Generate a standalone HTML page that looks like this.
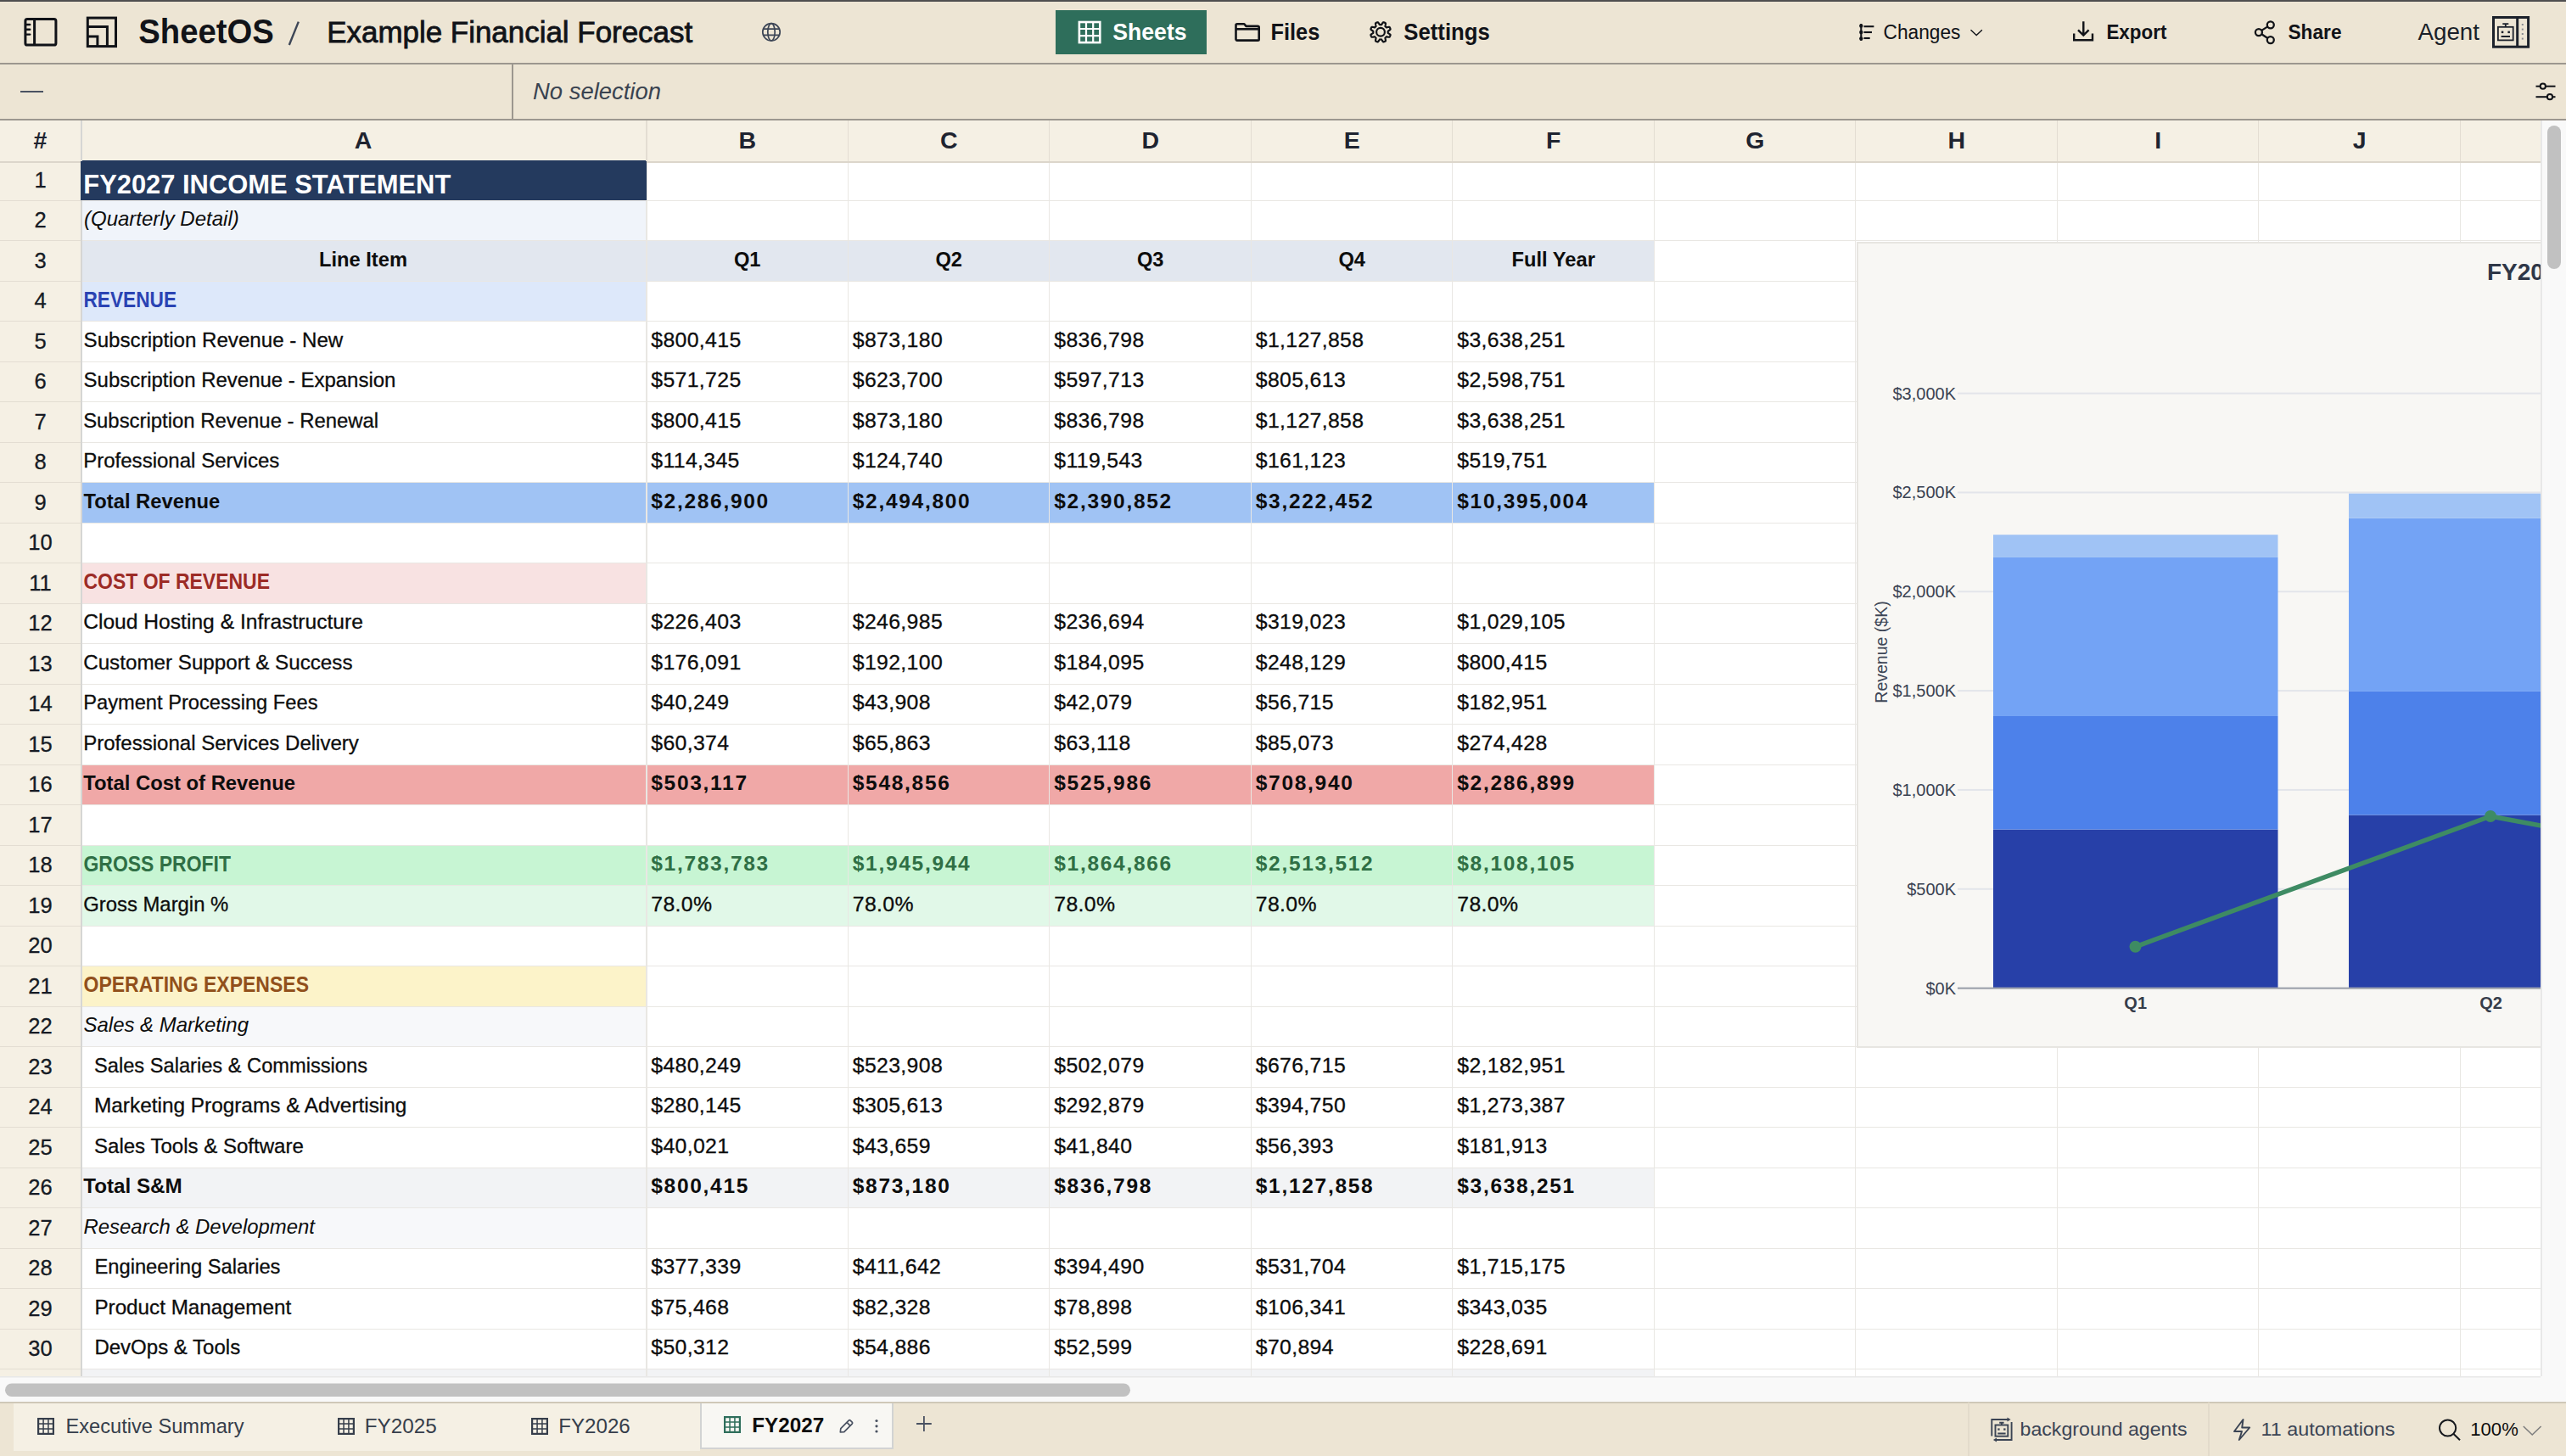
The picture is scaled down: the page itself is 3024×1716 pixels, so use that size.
<!DOCTYPE html>
<html><head><meta charset="utf-8"><title>SheetOS - Example Financial Forecast</title>
<style>
html,body{margin:0;padding:0;width:3024px;height:1716px;overflow:hidden;background:#ede5d4;}
svg{display:block;font-family:"Liberation Sans", sans-serif;}
text{white-space:pre;}
</style></head><body>
<svg width="3024" height="1716" viewBox="0 0 3024 1716">
<rect x="0" y="0" width="3024" height="1716" fill="#ede5d4" />
<rect x="0" y="0" width="3024" height="2" fill="#4f4f4f" />
<rect x="0" y="74" width="3024" height="2" fill="#9c978f" />
<rect x="603" y="76" width="2" height="64" fill="#9c978f" />
<rect x="0" y="140" width="3024" height="2" fill="#9c978f" />
<rect x="0" y="142" width="2994" height="48" fill="#f5f0e4" />
<rect x="0" y="190" width="95" height="1432" fill="#f5f0e4" />
<rect x="97" y="190" width="2897" height="1432" fill="#ffffff" />
<rect x="97" y="189" width="664" height="47" fill="#243a5e" />
<rect x="97" y="237" width="664" height="46" fill="#f0f4fa" />
<rect x="97" y="284" width="664" height="47" fill="#e2e7ef" />
<rect x="763" y="284" width="236" height="47" fill="#e2e7ef" />
<rect x="1000" y="284" width="236" height="47" fill="#e2e7ef" />
<rect x="1237" y="284" width="237" height="47" fill="#e2e7ef" />
<rect x="1475" y="284" width="236" height="47" fill="#e2e7ef" />
<rect x="1712" y="284" width="237" height="47" fill="#e2e7ef" />
<rect x="97" y="332" width="664" height="46" fill="#dde8fa" />
<rect x="97" y="569" width="664" height="47" fill="#a0c3f4" />
<rect x="763" y="569" width="236" height="47" fill="#a0c3f4" />
<rect x="1000" y="569" width="236" height="47" fill="#a0c3f4" />
<rect x="1237" y="569" width="237" height="47" fill="#a0c3f4" />
<rect x="1475" y="569" width="236" height="47" fill="#a0c3f4" />
<rect x="1712" y="569" width="237" height="47" fill="#a0c3f4" />
<rect x="97" y="664" width="664" height="47" fill="#f8e2e2" />
<rect x="97" y="902" width="664" height="46" fill="#f0a8a7" />
<rect x="763" y="902" width="236" height="46" fill="#f0a8a7" />
<rect x="1000" y="902" width="236" height="46" fill="#f0a8a7" />
<rect x="1237" y="902" width="237" height="46" fill="#f0a8a7" />
<rect x="1475" y="902" width="236" height="46" fill="#f0a8a7" />
<rect x="1712" y="902" width="237" height="46" fill="#f0a8a7" />
<rect x="97" y="997" width="664" height="46" fill="#c7f5d3" />
<rect x="763" y="997" width="236" height="46" fill="#c7f5d3" />
<rect x="1000" y="997" width="236" height="46" fill="#c7f5d3" />
<rect x="1237" y="997" width="237" height="46" fill="#c7f5d3" />
<rect x="1475" y="997" width="236" height="46" fill="#c7f5d3" />
<rect x="1712" y="997" width="237" height="46" fill="#c7f5d3" />
<rect x="97" y="1044" width="664" height="47" fill="#e1f8e8" />
<rect x="763" y="1044" width="236" height="47" fill="#e1f8e8" />
<rect x="1000" y="1044" width="236" height="47" fill="#e1f8e8" />
<rect x="1237" y="1044" width="237" height="47" fill="#e1f8e8" />
<rect x="1475" y="1044" width="236" height="47" fill="#e1f8e8" />
<rect x="1712" y="1044" width="237" height="47" fill="#e1f8e8" />
<rect x="97" y="1139" width="664" height="47" fill="#fcf3c9" />
<rect x="97" y="1187" width="664" height="46" fill="#f7f8fa" />
<rect x="97" y="1377" width="664" height="46" fill="#f2f3f5" />
<rect x="763" y="1377" width="236" height="46" fill="#f2f3f5" />
<rect x="1000" y="1377" width="236" height="46" fill="#f2f3f5" />
<rect x="1237" y="1377" width="237" height="46" fill="#f2f3f5" />
<rect x="1475" y="1377" width="236" height="46" fill="#f2f3f5" />
<rect x="1712" y="1377" width="237" height="46" fill="#f2f3f5" />
<rect x="97" y="1424" width="664" height="47" fill="#f7f8fa" />
<rect x="97" y="1614" width="664" height="47" fill="#f2f3f5" />
<rect x="763" y="1614" width="236" height="47" fill="#f2f3f5" />
<rect x="1000" y="1614" width="236" height="47" fill="#f2f3f5" />
<rect x="1237" y="1614" width="237" height="47" fill="#f2f3f5" />
<rect x="1475" y="1614" width="236" height="47" fill="#f2f3f5" />
<rect x="1712" y="1614" width="237" height="47" fill="#f2f3f5" />
<rect x="0" y="236" width="95" height="1" fill="#e3ddd2" />
<rect x="97" y="236" width="2897" height="1" fill="#e9e7e3" />
<rect x="0" y="283" width="95" height="1" fill="#e3ddd2" />
<rect x="97" y="283" width="2897" height="1" fill="#e9e7e3" />
<rect x="0" y="331" width="95" height="1" fill="#e3ddd2" />
<rect x="97" y="331" width="2897" height="1" fill="#e9e7e3" />
<rect x="0" y="378" width="95" height="1" fill="#e3ddd2" />
<rect x="97" y="378" width="2897" height="1" fill="#e9e7e3" />
<rect x="0" y="426" width="95" height="1" fill="#e3ddd2" />
<rect x="97" y="426" width="2897" height="1" fill="#e9e7e3" />
<rect x="0" y="473" width="95" height="1" fill="#e3ddd2" />
<rect x="97" y="473" width="2897" height="1" fill="#e9e7e3" />
<rect x="0" y="521" width="95" height="1" fill="#e3ddd2" />
<rect x="97" y="521" width="2897" height="1" fill="#e9e7e3" />
<rect x="0" y="568" width="95" height="1" fill="#e3ddd2" />
<rect x="97" y="568" width="2897" height="1" fill="#e9e7e3" />
<rect x="0" y="616" width="95" height="1" fill="#e3ddd2" />
<rect x="97" y="616" width="2897" height="1" fill="#e9e7e3" />
<rect x="0" y="663" width="95" height="1" fill="#e3ddd2" />
<rect x="97" y="663" width="2897" height="1" fill="#e9e7e3" />
<rect x="0" y="711" width="95" height="1" fill="#e3ddd2" />
<rect x="97" y="711" width="2897" height="1" fill="#e9e7e3" />
<rect x="0" y="758" width="95" height="1" fill="#e3ddd2" />
<rect x="97" y="758" width="2897" height="1" fill="#e9e7e3" />
<rect x="0" y="806" width="95" height="1" fill="#e3ddd2" />
<rect x="97" y="806" width="2897" height="1" fill="#e9e7e3" />
<rect x="0" y="853" width="95" height="1" fill="#e3ddd2" />
<rect x="97" y="853" width="2897" height="1" fill="#e9e7e3" />
<rect x="0" y="901" width="95" height="1" fill="#e3ddd2" />
<rect x="97" y="901" width="2897" height="1" fill="#e9e7e3" />
<rect x="0" y="948" width="95" height="1" fill="#e3ddd2" />
<rect x="97" y="948" width="2897" height="1" fill="#e9e7e3" />
<rect x="0" y="996" width="95" height="1" fill="#e3ddd2" />
<rect x="97" y="996" width="2897" height="1" fill="#e9e7e3" />
<rect x="0" y="1043" width="95" height="1" fill="#e3ddd2" />
<rect x="97" y="1043" width="2897" height="1" fill="#e9e7e3" />
<rect x="0" y="1091" width="95" height="1" fill="#e3ddd2" />
<rect x="97" y="1091" width="2897" height="1" fill="#e9e7e3" />
<rect x="0" y="1138" width="95" height="1" fill="#e3ddd2" />
<rect x="97" y="1138" width="2897" height="1" fill="#e9e7e3" />
<rect x="0" y="1186" width="95" height="1" fill="#e3ddd2" />
<rect x="97" y="1186" width="2897" height="1" fill="#e9e7e3" />
<rect x="0" y="1233" width="95" height="1" fill="#e3ddd2" />
<rect x="97" y="1233" width="2897" height="1" fill="#e9e7e3" />
<rect x="0" y="1281" width="95" height="1" fill="#e3ddd2" />
<rect x="97" y="1281" width="2897" height="1" fill="#e9e7e3" />
<rect x="0" y="1328" width="95" height="1" fill="#e3ddd2" />
<rect x="97" y="1328" width="2897" height="1" fill="#e9e7e3" />
<rect x="0" y="1376" width="95" height="1" fill="#e3ddd2" />
<rect x="97" y="1376" width="2897" height="1" fill="#e9e7e3" />
<rect x="0" y="1423" width="95" height="1" fill="#e3ddd2" />
<rect x="97" y="1423" width="2897" height="1" fill="#e9e7e3" />
<rect x="0" y="1471" width="95" height="1" fill="#e3ddd2" />
<rect x="97" y="1471" width="2897" height="1" fill="#e9e7e3" />
<rect x="0" y="1518" width="95" height="1" fill="#e3ddd2" />
<rect x="97" y="1518" width="2897" height="1" fill="#e9e7e3" />
<rect x="0" y="1566" width="95" height="1" fill="#e3ddd2" />
<rect x="97" y="1566" width="2897" height="1" fill="#e9e7e3" />
<rect x="0" y="1613" width="95" height="1" fill="#e3ddd2" />
<rect x="97" y="1613" width="2897" height="1" fill="#e9e7e3" />
<rect x="0" y="1661" width="95" height="1" fill="#e3ddd2" />
<rect x="97" y="1661" width="2897" height="1" fill="#e9e7e3" />
<rect x="0" y="190" width="2994" height="2" fill="#dcd6cb" />
<rect x="761" y="142" width="2" height="48" fill="#e3ddd2" />
<rect x="761" y="192" width="2" height="1430" fill="#e9e7e3" />
<rect x="999" y="142" width="1" height="48" fill="#e3ddd2" />
<rect x="999" y="192" width="1" height="1430" fill="#e9e7e3" />
<rect x="1236" y="142" width="1" height="48" fill="#e3ddd2" />
<rect x="1236" y="192" width="1" height="1430" fill="#e9e7e3" />
<rect x="1474" y="142" width="1" height="48" fill="#e3ddd2" />
<rect x="1474" y="192" width="1" height="1430" fill="#e9e7e3" />
<rect x="1711" y="142" width="1" height="48" fill="#e3ddd2" />
<rect x="1711" y="192" width="1" height="1430" fill="#e9e7e3" />
<rect x="1949" y="142" width="1" height="48" fill="#e3ddd2" />
<rect x="1949" y="192" width="1" height="1430" fill="#e9e7e3" />
<rect x="2186" y="142" width="1" height="48" fill="#e3ddd2" />
<rect x="2186" y="192" width="1" height="1430" fill="#e9e7e3" />
<rect x="2424" y="142" width="1" height="48" fill="#e3ddd2" />
<rect x="2424" y="192" width="1" height="1430" fill="#e9e7e3" />
<rect x="2661" y="142" width="1" height="48" fill="#e3ddd2" />
<rect x="2661" y="192" width="1" height="1430" fill="#e9e7e3" />
<rect x="2899" y="142" width="1" height="48" fill="#e3ddd2" />
<rect x="2899" y="192" width="1" height="1430" fill="#e9e7e3" />
<rect x="95" y="142" width="2" height="1480" fill="#d6d6d4" />
<rect x="95" y="190" width="667" height="46" fill="#243a5e" />
<text x="47.5" y="175" font-size="28.5" fill="#1f2430" font-weight="700" text-anchor="middle" >#</text>
<text x="428" y="175.2" font-size="28.5" fill="#1f2430" font-weight="700" text-anchor="middle" >A</text>
<text x="880.75" y="175.2" font-size="28.5" fill="#1f2430" font-weight="700" text-anchor="middle" >B</text>
<text x="1118.25" y="175.2" font-size="28.5" fill="#1f2430" font-weight="700" text-anchor="middle" >C</text>
<text x="1355.75" y="175.2" font-size="28.5" fill="#1f2430" font-weight="700" text-anchor="middle" >D</text>
<text x="1593.25" y="175.2" font-size="28.5" fill="#1f2430" font-weight="700" text-anchor="middle" >E</text>
<text x="1830.75" y="175.2" font-size="28.5" fill="#1f2430" font-weight="700" text-anchor="middle" >F</text>
<text x="2068.25" y="175.2" font-size="28.5" fill="#1f2430" font-weight="700" text-anchor="middle" >G</text>
<text x="2305.75" y="175.2" font-size="28.5" fill="#1f2430" font-weight="700" text-anchor="middle" >H</text>
<text x="2543.25" y="175.2" font-size="28.5" fill="#1f2430" font-weight="700" text-anchor="middle" >I</text>
<text x="2780.75" y="175.2" font-size="28.5" fill="#1f2430" font-weight="700" text-anchor="middle" >J</text>
<text x="47.5" y="220.6" font-size="25.5" fill="#161b24" text-anchor="middle" stroke="#161b24" stroke-width="0.3">1</text>
<text x="47.5" y="268.1" font-size="25.5" fill="#161b24" text-anchor="middle" stroke="#161b24" stroke-width="0.3">2</text>
<text x="47.5" y="315.6" font-size="25.5" fill="#161b24" text-anchor="middle" stroke="#161b24" stroke-width="0.3">3</text>
<text x="47.5" y="363.1" font-size="25.5" fill="#161b24" text-anchor="middle" stroke="#161b24" stroke-width="0.3">4</text>
<text x="47.5" y="410.6" font-size="25.5" fill="#161b24" text-anchor="middle" stroke="#161b24" stroke-width="0.3">5</text>
<text x="47.5" y="458.1" font-size="25.5" fill="#161b24" text-anchor="middle" stroke="#161b24" stroke-width="0.3">6</text>
<text x="47.5" y="505.6" font-size="25.5" fill="#161b24" text-anchor="middle" stroke="#161b24" stroke-width="0.3">7</text>
<text x="47.5" y="553.1" font-size="25.5" fill="#161b24" text-anchor="middle" stroke="#161b24" stroke-width="0.3">8</text>
<text x="47.5" y="600.6" font-size="25.5" fill="#161b24" text-anchor="middle" stroke="#161b24" stroke-width="0.3">9</text>
<text x="47.5" y="648.1" font-size="25.5" fill="#161b24" text-anchor="middle" stroke="#161b24" stroke-width="0.3">10</text>
<text x="47.5" y="695.6" font-size="25.5" fill="#161b24" text-anchor="middle" stroke="#161b24" stroke-width="0.3">11</text>
<text x="47.5" y="743.1" font-size="25.5" fill="#161b24" text-anchor="middle" stroke="#161b24" stroke-width="0.3">12</text>
<text x="47.5" y="790.6" font-size="25.5" fill="#161b24" text-anchor="middle" stroke="#161b24" stroke-width="0.3">13</text>
<text x="47.5" y="838.1" font-size="25.5" fill="#161b24" text-anchor="middle" stroke="#161b24" stroke-width="0.3">14</text>
<text x="47.5" y="885.6" font-size="25.5" fill="#161b24" text-anchor="middle" stroke="#161b24" stroke-width="0.3">15</text>
<text x="47.5" y="933.1" font-size="25.5" fill="#161b24" text-anchor="middle" stroke="#161b24" stroke-width="0.3">16</text>
<text x="47.5" y="980.6" font-size="25.5" fill="#161b24" text-anchor="middle" stroke="#161b24" stroke-width="0.3">17</text>
<text x="47.5" y="1028.1" font-size="25.5" fill="#161b24" text-anchor="middle" stroke="#161b24" stroke-width="0.3">18</text>
<text x="47.5" y="1075.6" font-size="25.5" fill="#161b24" text-anchor="middle" stroke="#161b24" stroke-width="0.3">19</text>
<text x="47.5" y="1123.1" font-size="25.5" fill="#161b24" text-anchor="middle" stroke="#161b24" stroke-width="0.3">20</text>
<text x="47.5" y="1170.6" font-size="25.5" fill="#161b24" text-anchor="middle" stroke="#161b24" stroke-width="0.3">21</text>
<text x="47.5" y="1218.1" font-size="25.5" fill="#161b24" text-anchor="middle" stroke="#161b24" stroke-width="0.3">22</text>
<text x="47.5" y="1265.6" font-size="25.5" fill="#161b24" text-anchor="middle" stroke="#161b24" stroke-width="0.3">23</text>
<text x="47.5" y="1313.1" font-size="25.5" fill="#161b24" text-anchor="middle" stroke="#161b24" stroke-width="0.3">24</text>
<text x="47.5" y="1360.6" font-size="25.5" fill="#161b24" text-anchor="middle" stroke="#161b24" stroke-width="0.3">25</text>
<text x="47.5" y="1408.1" font-size="25.5" fill="#161b24" text-anchor="middle" stroke="#161b24" stroke-width="0.3">26</text>
<text x="47.5" y="1455.6" font-size="25.5" fill="#161b24" text-anchor="middle" stroke="#161b24" stroke-width="0.3">27</text>
<text x="47.5" y="1503.1" font-size="25.5" fill="#161b24" text-anchor="middle" stroke="#161b24" stroke-width="0.3">28</text>
<text x="47.5" y="1550.6" font-size="25.5" fill="#161b24" text-anchor="middle" stroke="#161b24" stroke-width="0.3">29</text>
<text x="47.5" y="1598.1" font-size="25.5" fill="#161b24" text-anchor="middle" stroke="#161b24" stroke-width="0.3">30</text>
<text x="98.3" y="228.3" font-size="31.5" fill="#ffffff" font-weight="700" textLength="433" lengthAdjust="spacingAndGlyphs" >FY2027 INCOME STATEMENT</text>
<text x="99" y="266.4" font-size="24" fill="#0d0d0d" font-style="italic" >(Quarterly Detail)</text>
<text x="428" y="313.9" font-size="23.7" fill="#0d0d0d" font-weight="700" text-anchor="middle" >Line Item</text>
<text x="880.75" y="313.9" font-size="23.7" fill="#0d0d0d" font-weight="700" text-anchor="middle" >Q1</text>
<text x="1118.25" y="313.9" font-size="23.7" fill="#0d0d0d" font-weight="700" text-anchor="middle" >Q2</text>
<text x="1355.75" y="313.9" font-size="23.7" fill="#0d0d0d" font-weight="700" text-anchor="middle" >Q3</text>
<text x="1593.25" y="313.9" font-size="23.7" fill="#0d0d0d" font-weight="700" text-anchor="middle" >Q4</text>
<text x="1830.75" y="313.9" font-size="23.7" fill="#0d0d0d" font-weight="700" text-anchor="middle" >Full Year</text>
<text x="98.5" y="361.7" font-size="25.2" fill="#2a43b3" font-weight="700" textLength="109.5" lengthAdjust="spacingAndGlyphs" >REVENUE</text>
<text x="98.6" y="408.9" font-size="24.2" fill="#0d0d0d" textLength="305.7" lengthAdjust="spacingAndGlyphs" stroke="#0d0d0d" stroke-width="0.3">Subscription Revenue - New</text>
<text x="767.3" y="408.9" font-size="24.8" fill="#0d0d0d" letter-spacing="0.35" stroke="#0d0d0d" stroke-width="0.3">$800,415</text>
<text x="1004.8" y="408.9" font-size="24.8" fill="#0d0d0d" letter-spacing="0.35" stroke="#0d0d0d" stroke-width="0.3">$873,180</text>
<text x="1242.3" y="408.9" font-size="24.8" fill="#0d0d0d" letter-spacing="0.35" stroke="#0d0d0d" stroke-width="0.3">$836,798</text>
<text x="1479.8" y="408.9" font-size="24.8" fill="#0d0d0d" letter-spacing="0.35" stroke="#0d0d0d" stroke-width="0.3">$1,127,858</text>
<text x="1717.3" y="408.9" font-size="24.8" fill="#0d0d0d" letter-spacing="0.35" stroke="#0d0d0d" stroke-width="0.3">$3,638,251</text>
<text x="98.6" y="456.4" font-size="24.2" fill="#0d0d0d" textLength="367.8" lengthAdjust="spacingAndGlyphs" stroke="#0d0d0d" stroke-width="0.3">Subscription Revenue - Expansion</text>
<text x="767.3" y="456.4" font-size="24.8" fill="#0d0d0d" letter-spacing="0.35" stroke="#0d0d0d" stroke-width="0.3">$571,725</text>
<text x="1004.8" y="456.4" font-size="24.8" fill="#0d0d0d" letter-spacing="0.35" stroke="#0d0d0d" stroke-width="0.3">$623,700</text>
<text x="1242.3" y="456.4" font-size="24.8" fill="#0d0d0d" letter-spacing="0.35" stroke="#0d0d0d" stroke-width="0.3">$597,713</text>
<text x="1479.8" y="456.4" font-size="24.8" fill="#0d0d0d" letter-spacing="0.35" stroke="#0d0d0d" stroke-width="0.3">$805,613</text>
<text x="1717.3" y="456.4" font-size="24.8" fill="#0d0d0d" letter-spacing="0.35" stroke="#0d0d0d" stroke-width="0.3">$2,598,751</text>
<text x="98.14999999999999" y="503.9" font-size="24.2" fill="#0d0d0d" textLength="348.0" lengthAdjust="spacingAndGlyphs" stroke="#0d0d0d" stroke-width="0.3">Subscription Revenue - Renewal</text>
<text x="767.3" y="503.9" font-size="24.8" fill="#0d0d0d" letter-spacing="0.35" stroke="#0d0d0d" stroke-width="0.3">$800,415</text>
<text x="1004.8" y="503.9" font-size="24.8" fill="#0d0d0d" letter-spacing="0.35" stroke="#0d0d0d" stroke-width="0.3">$873,180</text>
<text x="1242.3" y="503.9" font-size="24.8" fill="#0d0d0d" letter-spacing="0.35" stroke="#0d0d0d" stroke-width="0.3">$836,798</text>
<text x="1479.8" y="503.9" font-size="24.8" fill="#0d0d0d" letter-spacing="0.35" stroke="#0d0d0d" stroke-width="0.3">$1,127,858</text>
<text x="1717.3" y="503.9" font-size="24.8" fill="#0d0d0d" letter-spacing="0.35" stroke="#0d0d0d" stroke-width="0.3">$3,638,251</text>
<text x="98.14999999999999" y="551.4" font-size="24.2" fill="#0d0d0d" textLength="231.2" lengthAdjust="spacingAndGlyphs" stroke="#0d0d0d" stroke-width="0.3">Professional Services</text>
<text x="767.3" y="551.4" font-size="24.8" fill="#0d0d0d" letter-spacing="0.35" stroke="#0d0d0d" stroke-width="0.3">$114,345</text>
<text x="1004.8" y="551.4" font-size="24.8" fill="#0d0d0d" letter-spacing="0.35" stroke="#0d0d0d" stroke-width="0.3">$124,740</text>
<text x="1242.3" y="551.4" font-size="24.8" fill="#0d0d0d" letter-spacing="0.35" stroke="#0d0d0d" stroke-width="0.3">$119,543</text>
<text x="1479.8" y="551.4" font-size="24.8" fill="#0d0d0d" letter-spacing="0.35" stroke="#0d0d0d" stroke-width="0.3">$161,123</text>
<text x="1717.3" y="551.4" font-size="24.8" fill="#0d0d0d" letter-spacing="0.35" stroke="#0d0d0d" stroke-width="0.3">$519,751</text>
<text x="98.5" y="598.9" font-size="24.2" fill="#0d0d0d" font-weight="700" textLength="160.7" lengthAdjust="spacingAndGlyphs" >Total Revenue</text>
<text x="767.3" y="598.9" font-size="24.5" fill="#0d0d0d" font-weight="700" letter-spacing="1.7">$2,286,900</text>
<text x="1004.8" y="598.9" font-size="24.5" fill="#0d0d0d" font-weight="700" letter-spacing="1.7">$2,494,800</text>
<text x="1242.3" y="598.9" font-size="24.5" fill="#0d0d0d" font-weight="700" letter-spacing="1.7">$2,390,852</text>
<text x="1479.8" y="598.9" font-size="24.5" fill="#0d0d0d" font-weight="700" letter-spacing="1.7">$3,222,452</text>
<text x="1717.3" y="598.9" font-size="24.5" fill="#0d0d0d" font-weight="700" letter-spacing="1.7">$10,395,004</text>
<text x="98.5" y="694.1999999999999" font-size="25.2" fill="#9c2b26" font-weight="700" textLength="219.5" lengthAdjust="spacingAndGlyphs" >COST OF REVENUE</text>
<text x="98.2" y="741.4" font-size="24.2" fill="#0d0d0d" textLength="329.7" lengthAdjust="spacingAndGlyphs" stroke="#0d0d0d" stroke-width="0.3">Cloud Hosting &amp; Infrastructure</text>
<text x="767.3" y="741.4" font-size="24.8" fill="#0d0d0d" letter-spacing="0.35" stroke="#0d0d0d" stroke-width="0.3">$226,403</text>
<text x="1004.8" y="741.4" font-size="24.8" fill="#0d0d0d" letter-spacing="0.35" stroke="#0d0d0d" stroke-width="0.3">$246,985</text>
<text x="1242.3" y="741.4" font-size="24.8" fill="#0d0d0d" letter-spacing="0.35" stroke="#0d0d0d" stroke-width="0.3">$236,694</text>
<text x="1479.8" y="741.4" font-size="24.8" fill="#0d0d0d" letter-spacing="0.35" stroke="#0d0d0d" stroke-width="0.3">$319,023</text>
<text x="1717.3" y="741.4" font-size="24.8" fill="#0d0d0d" letter-spacing="0.35" stroke="#0d0d0d" stroke-width="0.3">$1,029,105</text>
<text x="98.2" y="788.9" font-size="24.2" fill="#0d0d0d" textLength="317.3" lengthAdjust="spacingAndGlyphs" stroke="#0d0d0d" stroke-width="0.3">Customer Support &amp; Success</text>
<text x="767.3" y="788.9" font-size="24.8" fill="#0d0d0d" letter-spacing="0.35" stroke="#0d0d0d" stroke-width="0.3">$176,091</text>
<text x="1004.8" y="788.9" font-size="24.8" fill="#0d0d0d" letter-spacing="0.35" stroke="#0d0d0d" stroke-width="0.3">$192,100</text>
<text x="1242.3" y="788.9" font-size="24.8" fill="#0d0d0d" letter-spacing="0.35" stroke="#0d0d0d" stroke-width="0.3">$184,095</text>
<text x="1479.8" y="788.9" font-size="24.8" fill="#0d0d0d" letter-spacing="0.35" stroke="#0d0d0d" stroke-width="0.3">$248,129</text>
<text x="1717.3" y="788.9" font-size="24.8" fill="#0d0d0d" letter-spacing="0.35" stroke="#0d0d0d" stroke-width="0.3">$800,415</text>
<text x="98.2" y="836.4" font-size="24.2" fill="#0d0d0d" textLength="276.3" lengthAdjust="spacingAndGlyphs" stroke="#0d0d0d" stroke-width="0.3">Payment Processing Fees</text>
<text x="767.3" y="836.4" font-size="24.8" fill="#0d0d0d" letter-spacing="0.35" stroke="#0d0d0d" stroke-width="0.3">$40,249</text>
<text x="1004.8" y="836.4" font-size="24.8" fill="#0d0d0d" letter-spacing="0.35" stroke="#0d0d0d" stroke-width="0.3">$43,908</text>
<text x="1242.3" y="836.4" font-size="24.8" fill="#0d0d0d" letter-spacing="0.35" stroke="#0d0d0d" stroke-width="0.3">$42,079</text>
<text x="1479.8" y="836.4" font-size="24.8" fill="#0d0d0d" letter-spacing="0.35" stroke="#0d0d0d" stroke-width="0.3">$56,715</text>
<text x="1717.3" y="836.4" font-size="24.8" fill="#0d0d0d" letter-spacing="0.35" stroke="#0d0d0d" stroke-width="0.3">$182,951</text>
<text x="98.2" y="883.9" font-size="24.2" fill="#0d0d0d" textLength="324.7" lengthAdjust="spacingAndGlyphs" stroke="#0d0d0d" stroke-width="0.3">Professional Services Delivery</text>
<text x="767.3" y="883.9" font-size="24.8" fill="#0d0d0d" letter-spacing="0.35" stroke="#0d0d0d" stroke-width="0.3">$60,374</text>
<text x="1004.8" y="883.9" font-size="24.8" fill="#0d0d0d" letter-spacing="0.35" stroke="#0d0d0d" stroke-width="0.3">$65,863</text>
<text x="1242.3" y="883.9" font-size="24.8" fill="#0d0d0d" letter-spacing="0.35" stroke="#0d0d0d" stroke-width="0.3">$63,118</text>
<text x="1479.8" y="883.9" font-size="24.8" fill="#0d0d0d" letter-spacing="0.35" stroke="#0d0d0d" stroke-width="0.3">$85,073</text>
<text x="1717.3" y="883.9" font-size="24.8" fill="#0d0d0d" letter-spacing="0.35" stroke="#0d0d0d" stroke-width="0.3">$274,428</text>
<text x="98.2" y="931.4" font-size="24.2" fill="#0d0d0d" font-weight="700" textLength="249.8" lengthAdjust="spacingAndGlyphs" >Total Cost of Revenue</text>
<text x="767.3" y="931.4" font-size="24.5" fill="#0d0d0d" font-weight="700" letter-spacing="1.7">$503,117</text>
<text x="1004.8" y="931.4" font-size="24.5" fill="#0d0d0d" font-weight="700" letter-spacing="1.7">$548,856</text>
<text x="1242.3" y="931.4" font-size="24.5" fill="#0d0d0d" font-weight="700" letter-spacing="1.7">$525,986</text>
<text x="1479.8" y="931.4" font-size="24.5" fill="#0d0d0d" font-weight="700" letter-spacing="1.7">$708,940</text>
<text x="1717.3" y="931.4" font-size="24.5" fill="#0d0d0d" font-weight="700" letter-spacing="1.7">$2,286,899</text>
<text x="98.5" y="1026.7" font-size="25.2" fill="#2f6f45" font-weight="700" textLength="173.5" lengthAdjust="spacingAndGlyphs" >GROSS PROFIT</text>
<text x="767.3" y="1026.4" font-size="24.5" fill="#2f6f45" font-weight="700" letter-spacing="1.7">$1,783,783</text>
<text x="1004.8" y="1026.4" font-size="24.5" fill="#2f6f45" font-weight="700" letter-spacing="1.7">$1,945,944</text>
<text x="1242.3" y="1026.4" font-size="24.5" fill="#2f6f45" font-weight="700" letter-spacing="1.7">$1,864,866</text>
<text x="1479.8" y="1026.4" font-size="24.5" fill="#2f6f45" font-weight="700" letter-spacing="1.7">$2,513,512</text>
<text x="1717.3" y="1026.4" font-size="24.5" fill="#2f6f45" font-weight="700" letter-spacing="1.7">$8,108,105</text>
<text x="98.2" y="1073.9" font-size="24.2" fill="#0d0d0d" textLength="171.1" lengthAdjust="spacingAndGlyphs" stroke="#0d0d0d" stroke-width="0.3">Gross Margin %</text>
<text x="767.3" y="1073.9" font-size="24.8" fill="#0d0d0d" letter-spacing="0.35" stroke="#0d0d0d" stroke-width="0.3">78.0%</text>
<text x="1004.8" y="1073.9" font-size="24.8" fill="#0d0d0d" letter-spacing="0.35" stroke="#0d0d0d" stroke-width="0.3">78.0%</text>
<text x="1242.3" y="1073.9" font-size="24.8" fill="#0d0d0d" letter-spacing="0.35" stroke="#0d0d0d" stroke-width="0.3">78.0%</text>
<text x="1479.8" y="1073.9" font-size="24.8" fill="#0d0d0d" letter-spacing="0.35" stroke="#0d0d0d" stroke-width="0.3">78.0%</text>
<text x="1717.3" y="1073.9" font-size="24.8" fill="#0d0d0d" letter-spacing="0.35" stroke="#0d0d0d" stroke-width="0.3">78.0%</text>
<text x="98.5" y="1169.2" font-size="25.2" fill="#91501c" font-weight="700" textLength="265.5" lengthAdjust="spacingAndGlyphs" >OPERATING EXPENSES</text>
<text x="98.5" y="1216.4" font-size="24" fill="#0d0d0d" font-style="italic" textLength="194.5" lengthAdjust="spacingAndGlyphs" >Sales &amp; Marketing</text>
<text x="111.0" y="1263.9" font-size="24.2" fill="#0d0d0d" textLength="322.0" lengthAdjust="spacingAndGlyphs" stroke="#0d0d0d" stroke-width="0.3">Sales Salaries &amp; Commissions</text>
<text x="767.3" y="1263.9" font-size="24.8" fill="#0d0d0d" letter-spacing="0.35" stroke="#0d0d0d" stroke-width="0.3">$480,249</text>
<text x="1004.8" y="1263.9" font-size="24.8" fill="#0d0d0d" letter-spacing="0.35" stroke="#0d0d0d" stroke-width="0.3">$523,908</text>
<text x="1242.3" y="1263.9" font-size="24.8" fill="#0d0d0d" letter-spacing="0.35" stroke="#0d0d0d" stroke-width="0.3">$502,079</text>
<text x="1479.8" y="1263.9" font-size="24.8" fill="#0d0d0d" letter-spacing="0.35" stroke="#0d0d0d" stroke-width="0.3">$676,715</text>
<text x="1717.3" y="1263.9" font-size="24.8" fill="#0d0d0d" letter-spacing="0.35" stroke="#0d0d0d" stroke-width="0.3">$2,182,951</text>
<text x="111.0" y="1311.4" font-size="24.2" fill="#0d0d0d" textLength="368.4" lengthAdjust="spacingAndGlyphs" stroke="#0d0d0d" stroke-width="0.3">Marketing Programs &amp; Advertising</text>
<text x="767.3" y="1311.4" font-size="24.8" fill="#0d0d0d" letter-spacing="0.35" stroke="#0d0d0d" stroke-width="0.3">$280,145</text>
<text x="1004.8" y="1311.4" font-size="24.8" fill="#0d0d0d" letter-spacing="0.35" stroke="#0d0d0d" stroke-width="0.3">$305,613</text>
<text x="1242.3" y="1311.4" font-size="24.8" fill="#0d0d0d" letter-spacing="0.35" stroke="#0d0d0d" stroke-width="0.3">$292,879</text>
<text x="1479.8" y="1311.4" font-size="24.8" fill="#0d0d0d" letter-spacing="0.35" stroke="#0d0d0d" stroke-width="0.3">$394,750</text>
<text x="1717.3" y="1311.4" font-size="24.8" fill="#0d0d0d" letter-spacing="0.35" stroke="#0d0d0d" stroke-width="0.3">$1,273,387</text>
<text x="111.0" y="1358.9" font-size="24.2" fill="#0d0d0d" textLength="246.8" lengthAdjust="spacingAndGlyphs" stroke="#0d0d0d" stroke-width="0.3">Sales Tools &amp; Software</text>
<text x="767.3" y="1358.9" font-size="24.8" fill="#0d0d0d" letter-spacing="0.35" stroke="#0d0d0d" stroke-width="0.3">$40,021</text>
<text x="1004.8" y="1358.9" font-size="24.8" fill="#0d0d0d" letter-spacing="0.35" stroke="#0d0d0d" stroke-width="0.3">$43,659</text>
<text x="1242.3" y="1358.9" font-size="24.8" fill="#0d0d0d" letter-spacing="0.35" stroke="#0d0d0d" stroke-width="0.3">$41,840</text>
<text x="1479.8" y="1358.9" font-size="24.8" fill="#0d0d0d" letter-spacing="0.35" stroke="#0d0d0d" stroke-width="0.3">$56,393</text>
<text x="1717.3" y="1358.9" font-size="24.8" fill="#0d0d0d" letter-spacing="0.35" stroke="#0d0d0d" stroke-width="0.3">$181,913</text>
<text x="98.2" y="1406.4" font-size="24.2" fill="#0d0d0d" font-weight="700" textLength="116.6" lengthAdjust="spacingAndGlyphs" >Total S&amp;M</text>
<text x="767.3" y="1406.4" font-size="24.5" fill="#0d0d0d" font-weight="700" letter-spacing="1.7">$800,415</text>
<text x="1004.8" y="1406.4" font-size="24.5" fill="#0d0d0d" font-weight="700" letter-spacing="1.7">$873,180</text>
<text x="1242.3" y="1406.4" font-size="24.5" fill="#0d0d0d" font-weight="700" letter-spacing="1.7">$836,798</text>
<text x="1479.8" y="1406.4" font-size="24.5" fill="#0d0d0d" font-weight="700" letter-spacing="1.7">$1,127,858</text>
<text x="1717.3" y="1406.4" font-size="24.5" fill="#0d0d0d" font-weight="700" letter-spacing="1.7">$3,638,251</text>
<text x="98.5" y="1453.9" font-size="24" fill="#0d0d0d" font-style="italic" textLength="272.5" lengthAdjust="spacingAndGlyphs" >Research &amp; Development</text>
<text x="111.39999999999999" y="1501.4" font-size="24.2" fill="#0d0d0d" textLength="219.1" lengthAdjust="spacingAndGlyphs" stroke="#0d0d0d" stroke-width="0.3">Engineering Salaries</text>
<text x="767.3" y="1501.4" font-size="24.8" fill="#0d0d0d" letter-spacing="0.35" stroke="#0d0d0d" stroke-width="0.3">$377,339</text>
<text x="1004.8" y="1501.4" font-size="24.8" fill="#0d0d0d" letter-spacing="0.35" stroke="#0d0d0d" stroke-width="0.3">$411,642</text>
<text x="1242.3" y="1501.4" font-size="24.8" fill="#0d0d0d" letter-spacing="0.35" stroke="#0d0d0d" stroke-width="0.3">$394,490</text>
<text x="1479.8" y="1501.4" font-size="24.8" fill="#0d0d0d" letter-spacing="0.35" stroke="#0d0d0d" stroke-width="0.3">$531,704</text>
<text x="1717.3" y="1501.4" font-size="24.8" fill="#0d0d0d" letter-spacing="0.35" stroke="#0d0d0d" stroke-width="0.3">$1,715,175</text>
<text x="111.39999999999999" y="1548.9" font-size="24.2" fill="#0d0d0d" textLength="231.8" lengthAdjust="spacingAndGlyphs" stroke="#0d0d0d" stroke-width="0.3">Product Management</text>
<text x="767.3" y="1548.9" font-size="24.8" fill="#0d0d0d" letter-spacing="0.35" stroke="#0d0d0d" stroke-width="0.3">$75,468</text>
<text x="1004.8" y="1548.9" font-size="24.8" fill="#0d0d0d" letter-spacing="0.35" stroke="#0d0d0d" stroke-width="0.3">$82,328</text>
<text x="1242.3" y="1548.9" font-size="24.8" fill="#0d0d0d" letter-spacing="0.35" stroke="#0d0d0d" stroke-width="0.3">$78,898</text>
<text x="1479.8" y="1548.9" font-size="24.8" fill="#0d0d0d" letter-spacing="0.35" stroke="#0d0d0d" stroke-width="0.3">$106,341</text>
<text x="1717.3" y="1548.9" font-size="24.8" fill="#0d0d0d" letter-spacing="0.35" stroke="#0d0d0d" stroke-width="0.3">$343,035</text>
<text x="111.39999999999999" y="1596.4" font-size="24.2" fill="#0d0d0d" textLength="171.8" lengthAdjust="spacingAndGlyphs" stroke="#0d0d0d" stroke-width="0.3">DevOps &amp; Tools</text>
<text x="767.3" y="1596.4" font-size="24.8" fill="#0d0d0d" letter-spacing="0.35" stroke="#0d0d0d" stroke-width="0.3">$50,312</text>
<text x="1004.8" y="1596.4" font-size="24.8" fill="#0d0d0d" letter-spacing="0.35" stroke="#0d0d0d" stroke-width="0.3">$54,886</text>
<text x="1242.3" y="1596.4" font-size="24.8" fill="#0d0d0d" letter-spacing="0.35" stroke="#0d0d0d" stroke-width="0.3">$52,599</text>
<text x="1479.8" y="1596.4" font-size="24.8" fill="#0d0d0d" letter-spacing="0.35" stroke="#0d0d0d" stroke-width="0.3">$70,894</text>
<text x="1717.3" y="1596.4" font-size="24.8" fill="#0d0d0d" letter-spacing="0.35" stroke="#0d0d0d" stroke-width="0.3">$228,691</text>
<svg x="2188" y="285" width="806" height="950" overflow="hidden">
<rect x="0" y="0" width="900" height="950" fill="#e7e5e1" />
<rect x="2" y="2" width="900" height="946" fill="#f8f7f4" />
<rect x="119" y="761.7665" width="900" height="2" fill="#e3e5ea" />
<text x="117" y="769.7665" font-size="20" fill="#3a4252" text-anchor="end" >$500K</text>
<rect x="119" y="644.9329999999999" width="900" height="2" fill="#e3e5ea" />
<text x="117" y="652.9329999999999" font-size="20" fill="#3a4252" text-anchor="end" >$1,000K</text>
<rect x="119" y="528.0994999999998" width="900" height="2" fill="#e3e5ea" />
<text x="117" y="536.0994999999998" font-size="20" fill="#3a4252" text-anchor="end" >$1,500K</text>
<rect x="119" y="411.26599999999985" width="900" height="2" fill="#e3e5ea" />
<text x="117" y="419.26599999999985" font-size="20" fill="#3a4252" text-anchor="end" >$2,000K</text>
<rect x="119" y="294.4324999999999" width="900" height="2" fill="#e3e5ea" />
<text x="117" y="302.4324999999999" font-size="20" fill="#3a4252" text-anchor="end" >$2,500K</text>
<rect x="119" y="177.59899999999982" width="900" height="2" fill="#e3e5ea" />
<text x="117" y="185.59899999999982" font-size="20" fill="#3a4252" text-anchor="end" >$3,000K</text>
<text x="117" y="886.5999999999999" font-size="20" fill="#3a4252" text-anchor="end" >$0K</text>
<rect x="161" y="692.5694281949999" width="335.5" height="187.03057180500002" fill="#2740a8" />
<rect x="161" y="558.97616262" width="335.5" height="133.59326557499992" fill="#4d81ea" />
<rect x="161" y="371.94559081499995" width="335.5" height="187.03057180500002" fill="#73a3f5" />
<rect x="161" y="345.2269377" width="335.5" height="26.71865311499994" fill="#a0c3f5" />
<rect x="580" y="675.5666489399999" width="335.5" height="204.03335105999997" fill="#2740a8" />
<rect x="580" y="529.8285410399999" width="335.5" height="145.73810790000005" fill="#4d81ea" />
<rect x="580" y="325.7951899799999" width="335.5" height="204.03335105999997" fill="#73a3f5" />
<rect x="580" y="296.64756839999995" width="335.5" height="29.147621579999964" fill="#a0c3f5" />
<rect x="119" y="878.5999999999999" width="900" height="2.2" fill="#9ea3ad" />
<text x="328.6999999999998" y="903.5" font-size="20" fill="#363d4a" font-weight="700" text-anchor="middle" >Q1</text>
<text x="747.5" y="903.5" font-size="20" fill="#363d4a" font-weight="700" text-anchor="middle" >Q2</text>
<text x="0" y="0" font-size="19.5" fill="#3f4757" text-anchor="middle" transform="translate(35.5,483.5) rotate(-90)">Revenue ($K)</text>
<polyline points="328.5,830.8 747,677 1166,755" fill="none" stroke="#3e8b63" stroke-width="5.5" stroke-linejoin="round"/>
<circle cx="328.5" cy="830.8" r="7" fill="#3e8b63"/>
<circle cx="747" cy="677" r="7" fill="#3e8b63"/>
<text x="743" y="45" font-size="28" fill="#2f3747" font-weight="700" >FY2027 Revenue Mix</text>
</svg>
<rect x="2994" y="142" width="30" height="1480" fill="#f9f9f9" />
<rect x="2994" y="142" width="2" height="1480" fill="#e8e8e8" />
<rect x="3002" y="148" width="16" height="169" fill="#c1c1c1" rx="8"/>
<rect x="0" y="1622" width="3024" height="30" fill="#f9f9f9" />
<rect x="0" y="1622" width="2994" height="1.5" fill="#e8e8e8" />
<rect x="6" y="1630.5" width="1326" height="15.5" fill="#c1c1c1" rx="7.75"/>
<rect x="0" y="1652" width="3024" height="2" fill="#cfc8b8" />
<rect x="0" y="1654" width="3024" height="62" fill="#ede5d4" />
<rect x="16" y="1654" width="809" height="56" fill="#f5f0e4" />
<rect x="825" y="1654" width="228" height="54" fill="#d2d3d3" />
<rect x="827" y="1654" width="224" height="52" fill="#f8f7f3" />
<rect x="2319" y="1653" width="2" height="63" fill="#e3dbcb" />
<rect x="2602" y="1653" width="2" height="63" fill="#e3dbcb" />
<g fill="none" stroke="#111318" stroke-width="3"><rect x="29.9" y="22.6" width="36" height="30.5" rx="2.2"/><line x1="40.6" y1="22.6" x2="40.6" y2="53.1"/><g stroke-width="2.4" stroke-linecap="round"><line x1="31" y1="29" x2="35.2" y2="29"/><line x1="31" y1="34.8" x2="35.2" y2="34.8"/><line x1="31" y1="40.6" x2="35.2" y2="40.6"/></g></g>
<g fill="none" stroke="#111318" stroke-width="3" stroke-linecap="butt" stroke-linejoin="miter"><rect x="103.3" y="21.1" width="33.2" height="33.5"/><path d="M103.3 31.6 H126.4 V54.6"/><path d="M103.3 43.1 H114.9 V54.6"/></g>
<text x="163.3" y="51" font-size="40.5" fill="#111318" font-weight="700" textLength="159.5" lengthAdjust="spacingAndGlyphs" >SheetOS</text>
<line x1="340.8" y1="53" x2="351.8" y2="25.6" stroke="#3d4656" stroke-width="2.4"/>
<text x="385.2" y="50" font-size="35.5" fill="#111318" textLength="431" lengthAdjust="spacingAndGlyphs" stroke="#111318" stroke-width="0.8">Example Financial Forecast</text>
<g fill="none" stroke="#3d4656" stroke-width="1.7"><circle cx="909" cy="37.8" r="10.2"/><ellipse cx="909" cy="37.8" rx="4.2" ry="10.2"/><path d="M899.5 34.2 H918.5 M899.5 41.3 H918.5"/></g>
<rect x="1244" y="12" width="178" height="52" fill="#2e6e5b" />
<g fill="none" stroke="#ffffff" stroke-width="2.6"><rect x="1271.9" y="26" width="24.4" height="24.1"/><path d="M1280 26 V50.1 M1288.2 26 V50.1 M1271.9 34 H1296.3 M1271.9 42.1 H1296.3" stroke-width="2.2"/></g>
<text x="1311.2" y="47" font-size="27" fill="#ffffff" font-weight="700" textLength="87.5" lengthAdjust="spacingAndGlyphs" >Sheets</text>
<g fill="none" stroke="#111318" stroke-width="2.6" stroke-linejoin="round"><path d="M1456.5 46.5 V29.7 Q1456.5 28.2 1458 28.2 H1466.3 L1468.5 30.9 H1482.2 Q1483.7 30.9 1483.7 32.4 V46.4 Q1483.7 47.6 1482.2 47.6 H1458 Q1456.5 47.6 1456.5 46.1 Z"/><line x1="1456.5" y1="34.3" x2="1483.7" y2="34.3"/></g>
<text x="1497.5" y="46.8" font-size="27" fill="#111318" font-weight="700" textLength="57.8" lengthAdjust="spacingAndGlyphs" >Files</text>
<polygon points="1627.00,29.10 1627.28,29.10 1627.57,29.12 1627.85,29.14 1628.16,29.01 1628.57,28.32 1629.03,27.60 1629.54,26.90 1630.09,26.28 1630.51,26.22 1630.89,26.34 1631.26,26.48 1631.63,26.62 1631.99,26.78 1632.35,26.95 1632.70,27.13 1632.96,27.47 1632.91,28.30 1632.78,29.15 1632.60,29.99 1632.40,30.76 1632.52,31.07 1632.74,31.26 1632.95,31.45 1633.15,31.65 1633.35,31.85 1633.54,32.06 1633.73,32.28 1634.04,32.40 1634.81,32.20 1635.65,32.02 1636.50,31.89 1637.33,31.83 1637.67,32.10 1637.85,32.45 1638.02,32.81 1638.18,33.17 1638.32,33.54 1638.46,33.91 1638.58,34.29 1638.52,34.71 1637.90,35.26 1637.20,35.77 1636.48,36.23 1635.79,36.64 1635.66,36.95 1635.68,37.23 1635.70,37.52 1635.70,37.80 1635.70,38.08 1635.68,38.37 1635.66,38.65 1635.79,38.96 1636.48,39.37 1637.20,39.83 1637.90,40.34 1638.52,40.89 1638.58,41.31 1638.46,41.69 1638.32,42.06 1638.18,42.43 1638.02,42.79 1637.85,43.15 1637.67,43.50 1637.33,43.77 1636.50,43.71 1635.65,43.58 1634.81,43.40 1634.04,43.20 1633.73,43.32 1633.54,43.54 1633.35,43.75 1633.15,43.95 1632.95,44.15 1632.74,44.34 1632.52,44.53 1632.40,44.84 1632.60,45.61 1632.78,46.45 1632.91,47.30 1632.96,48.13 1632.70,48.47 1632.35,48.65 1631.99,48.82 1631.63,48.98 1631.26,49.12 1630.89,49.26 1630.51,49.38 1630.09,49.32 1629.54,48.70 1629.03,48.00 1628.57,47.28 1628.16,46.59 1627.85,46.46 1627.57,46.48 1627.28,46.50 1627.00,46.50 1626.72,46.50 1626.43,46.48 1626.15,46.46 1625.84,46.59 1625.43,47.28 1624.97,48.00 1624.46,48.70 1623.91,49.32 1623.49,49.38 1623.11,49.26 1622.74,49.12 1622.37,48.98 1622.01,48.82 1621.65,48.65 1621.30,48.47 1621.04,48.13 1621.09,47.30 1621.22,46.45 1621.40,45.61 1621.60,44.84 1621.48,44.53 1621.26,44.34 1621.05,44.15 1620.85,43.95 1620.65,43.75 1620.46,43.54 1620.27,43.32 1619.96,43.20 1619.19,43.40 1618.35,43.58 1617.50,43.71 1616.67,43.77 1616.33,43.50 1616.15,43.15 1615.98,42.79 1615.82,42.43 1615.68,42.06 1615.54,41.69 1615.42,41.31 1615.48,40.89 1616.10,40.34 1616.80,39.83 1617.52,39.37 1618.21,38.96 1618.34,38.65 1618.32,38.37 1618.30,38.08 1618.30,37.80 1618.30,37.52 1618.32,37.23 1618.34,36.95 1618.21,36.64 1617.52,36.23 1616.80,35.77 1616.10,35.26 1615.48,34.71 1615.42,34.29 1615.54,33.91 1615.68,33.54 1615.82,33.17 1615.98,32.81 1616.15,32.45 1616.33,32.10 1616.67,31.83 1617.50,31.89 1618.35,32.02 1619.19,32.20 1619.96,32.40 1620.27,32.28 1620.46,32.06 1620.65,31.85 1620.85,31.65 1621.05,31.45 1621.26,31.26 1621.48,31.07 1621.60,30.76 1621.40,29.99 1621.22,29.15 1621.09,28.30 1621.04,27.47 1621.30,27.13 1621.65,26.95 1622.01,26.78 1622.37,26.62 1622.74,26.48 1623.11,26.34 1623.49,26.22 1623.91,26.28 1624.46,26.90 1624.97,27.60 1625.43,28.32 1625.84,29.01 1626.15,29.14 1626.43,29.12 1626.72,29.10" fill="none" stroke="#111318" stroke-width="2.2" stroke-linejoin="round"/>
<circle cx="1627" cy="37.8" r="4.9" fill="none" stroke="#111318" stroke-width="2.2"/>
<text x="1654.3" y="46.8" font-size="27" fill="#111318" font-weight="700" textLength="101.5" lengthAdjust="spacingAndGlyphs" >Settings</text>
<g fill="none" stroke="#111318" stroke-width="2.1" stroke-linecap="butt"><line x1="2193.3" y1="28" x2="2193.3" y2="48"/><line x1="2196.5" y1="31.2" x2="2208.4" y2="31.2"/><line x1="2196.5" y1="38" x2="2206" y2="38"/><line x1="2196.5" y1="45" x2="2203.7" y2="45"/></g><g fill="#111318"><circle cx="2193.3" cy="30.5" r="2.2"/><circle cx="2193.3" cy="38" r="2.2"/><circle cx="2193.3" cy="45.5" r="2.2"/></g>
<text x="2219.5" y="45.6" font-size="23" fill="#111318" textLength="91" lengthAdjust="spacingAndGlyphs" >Changes</text>
<path d="M2322.5 35.3 L2329.2 41.6 L2335.9 35.3" fill="none" stroke="#111318" stroke-width="1.4"/>
<g fill="none" stroke="#111318" stroke-width="2.4"><path d="M2455.3 25.2 V41.5 M2449 35.3 L2455.3 41.6 L2461.6 35.3"/><path d="M2444.2 39.6 V47.3 H2466 V39.6"/></g>
<text x="2482.4" y="45.8" font-size="24.3" fill="#111318" font-weight="700" textLength="71" lengthAdjust="spacingAndGlyphs" >Export</text>
<g fill="none" stroke="#111318" stroke-width="2.3"><circle cx="2675.8" cy="29.3" r="4"/><circle cx="2661.9" cy="38.1" r="4"/><circle cx="2675.8" cy="47.1" r="4"/><line x1="2665.3" y1="35.9" x2="2672.4" y2="31.4"/><line x1="2665.3" y1="40.3" x2="2672.4" y2="45"/></g>
<text x="2696.5" y="45.8" font-size="24.3" fill="#111318" font-weight="700" textLength="63" lengthAdjust="spacingAndGlyphs" >Share</text>
<text x="2849.5" y="46.8" font-size="27.5" fill="#1a1f29" textLength="72.5" lengthAdjust="spacingAndGlyphs" >Agent</text>
<g fill="none" stroke="#1c212b" stroke-width="3"><rect x="2938.5" y="20.5" width="41.1" height="34.7"/><line x1="2966.7" y1="20.5" x2="2966.7" y2="55.2"/></g><g fill="none" stroke="#1c212b" stroke-width="1.8"><rect x="2943.9" y="31.8" width="17.8" height="15.6"/><path d="M2952.8 31.8 V28.2 M2949.3 28.2 H2956.3 M2947.6 43 H2958"/></g><g fill="#1c212b"><rect x="2947.8" y="36.6" width="2.5" height="2.5"/><rect x="2955.4" y="36.6" width="2.5" height="2.5"/></g><g fill="#8a8d93"><rect x="2971.8" y="28" width="2" height="2"/><rect x="2971.8" y="33.6" width="2" height="2"/><rect x="2971.8" y="39" width="2" height="2"/><rect x="2971.8" y="44.6" width="2" height="2"/></g>
<rect x="24" y="107" width="27" height="2" fill="#4a5262" />
<text x="628" y="117" font-size="27" fill="#3a4350" font-style="italic" textLength="151" lengthAdjust="spacingAndGlyphs" >No selection</text>
<g fill="none" stroke="#111318" stroke-width="2"><line x1="2988.5" y1="101.7" x2="3011.5" y2="101.7"/><line x1="2988.5" y1="114.2" x2="3011.5" y2="114.2"/></g><g fill="#ede5d4" stroke="#111318" stroke-width="2"><circle cx="2996.8" cy="101.7" r="3.1"/><circle cx="3005" cy="114.2" r="3.1"/></g>
<g fill="none" stroke="#363e4b" stroke-width="2.2"><rect x="45.1" y="1672.1" width="17.8" height="17.8"/><path d="M51.06666666666666 1671 V1691 M56.93333333333334 1671 V1691 M44 1678.0666666666668 H64 M44 1683.9333333333332 H64" stroke-width="1.5"/></g>
<text x="77.5" y="1688.9" font-size="24.8" fill="#363e4b" textLength="210" lengthAdjust="spacingAndGlyphs" >Executive Summary</text>
<g fill="none" stroke="#363e4b" stroke-width="2.2"><rect x="399.1" y="1672.1" width="17.8" height="17.8"/><path d="M405.06666666666666 1671 V1691 M410.93333333333334 1671 V1691 M398 1678.0666666666668 H418 M398 1683.9333333333332 H418" stroke-width="1.5"/></g>
<text x="429.8" y="1688.9" font-size="24.8" fill="#363e4b" textLength="85" lengthAdjust="spacingAndGlyphs" >FY2025</text>
<g fill="none" stroke="#363e4b" stroke-width="2.2"><rect x="627.1" y="1672.1" width="17.8" height="17.8"/><path d="M633.0666666666666 1671 V1691 M638.9333333333334 1671 V1691 M626 1678.0666666666668 H646 M626 1683.9333333333332 H646" stroke-width="1.5"/></g>
<text x="658.3" y="1688.9" font-size="24.8" fill="#363e4b" textLength="84.5" lengthAdjust="spacingAndGlyphs" >FY2026</text>
<g fill="none" stroke="#2e6e5b" stroke-width="2.2"><rect x="854.1" y="1670.1" width="17.8" height="17.8"/><path d="M860.0666666666666 1669 V1689 M865.9333333333334 1669 V1689 M853 1676.0666666666668 H873 M853 1681.9333333333332 H873" stroke-width="1.5"/></g>
<text x="886.2" y="1687.5" font-size="24.8" fill="#0d0d0d" font-weight="700" textLength="85" lengthAdjust="spacingAndGlyphs" >FY2027</text>
<g fill="none" stroke="#4a5262" stroke-width="1.7" stroke-linejoin="round"><path d="M990.3 1688 L990.8 1683.6 L1000.2 1674.2 Q1001.2 1673.2 1002.2 1674.2 L1004.2 1676.2 Q1005.2 1677.2 1004.2 1678.2 L994.8 1687.6 Z"/><line x1="998" y1="1676.4" x2="1002" y2="1680.4"/></g>
<g fill="#4a5262"><circle cx="1033" cy="1674.5" r="1.6"/><circle cx="1033" cy="1680.8" r="1.6"/><circle cx="1033" cy="1687" r="1.6"/></g>
<path d="M1080 1678 H1097.8 M1088.9 1669 V1687" stroke="#4a5262" stroke-width="1.8" fill="none"/>
<g fill="none" stroke="#3b4454" stroke-width="1.9"><path d="M2347.3 1692.5 V1673 H2366.5"/><path d="M2370.6 1676 V1697 H2352"/><rect x="2351.5" y="1679.5" width="14.8" height="13.2"/><path d="M2358.9 1679.5 V1676.7 M2356.2 1676.7 H2361.6 M2354.3 1689.5 H2363.6"/></g><g fill="#3b4454"><path d="M2365.5 1670.6 L2369.6 1673 L2365.5 1675.4 Z"/><path d="M2353 1694.6 L2348.9 1697 L2353 1699.4 Z"/><rect x="2354.3" y="1683.4" width="2.3" height="2.3"/><rect x="2361.2" y="1683.4" width="2.3" height="2.3"/></g>
<text x="2380.5" y="1691.8" font-size="22.8" fill="#3b4454" textLength="197" lengthAdjust="spacingAndGlyphs" >background agents</text>
<path d="M2643.5 1673 L2633 1687 H2642 L2638.8 1697 L2651.2 1682.5 H2642.2 Z" fill="none" stroke="#3b4454" stroke-width="1.9" stroke-linejoin="round"/>
<text x="2664.5" y="1691.8" font-size="22.8" fill="#3b4454" textLength="158" lengthAdjust="spacingAndGlyphs" >11 automations</text>
<g fill="none" stroke="#15181d" stroke-width="2"><circle cx="2884.6" cy="1683" r="9.6"/><line x1="2891.5" y1="1690" x2="2899" y2="1697.3"/></g>
<text x="2911.3" y="1691.8" font-size="22.8" fill="#0d0d0d" textLength="56.5" lengthAdjust="spacingAndGlyphs" >100%</text>
<path d="M2973.8 1681 L2984.2 1691 L2994.6 1681" fill="none" stroke="#7e7e7e" stroke-width="1.6"/>
</svg>
</body></html>
